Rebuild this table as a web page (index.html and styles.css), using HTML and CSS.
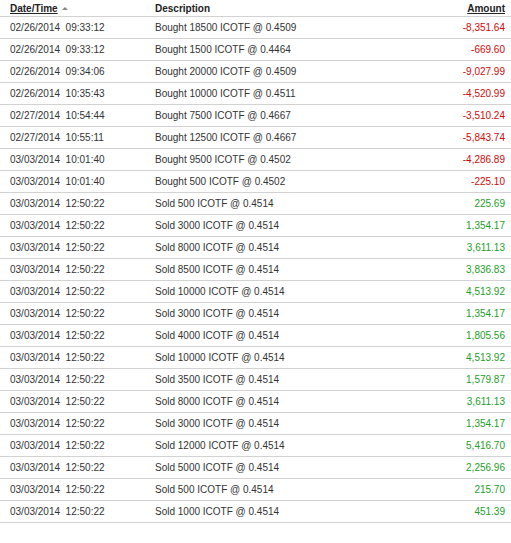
FILE: index.html
```html
<!DOCTYPE html>
<html>
<head>
<meta charset="utf-8">
<link rel="stylesheet" href="styles.css">
</head>
<body>
<table class="tx">
<thead>
<tr>
<th class="c-date"><span class="sort">Date/Time</span><span class="arrow"></span></th>
<th class="c-desc">Description</th>
<th class="c-amt"><span class="sort">Amount</span></th>
</tr>
</thead>
<tbody>
<tr><td class="c-date">02/26/2014&nbsp;&nbsp;09:33:12</td><td class="c-desc">Bought 18500 ICOTF @ 0.4509</td><td class="c-amt neg">-8,351.64</td></tr>
<tr><td class="c-date">02/26/2014&nbsp;&nbsp;09:33:12</td><td class="c-desc">Bought 1500 ICOTF @ 0.4464</td><td class="c-amt neg">-669.60</td></tr>
<tr><td class="c-date">02/26/2014&nbsp;&nbsp;09:34:06</td><td class="c-desc">Bought 20000 ICOTF @ 0.4509</td><td class="c-amt neg">-9,027.99</td></tr>
<tr><td class="c-date">02/26/2014&nbsp;&nbsp;10:35:43</td><td class="c-desc">Bought 10000 ICOTF @ 0.4511</td><td class="c-amt neg">-4,520.99</td></tr>
<tr><td class="c-date">02/27/2014&nbsp;&nbsp;10:54:44</td><td class="c-desc">Bought 7500 ICOTF @ 0.4667</td><td class="c-amt neg">-3,510.24</td></tr>
<tr><td class="c-date">02/27/2014&nbsp;&nbsp;10:55:11</td><td class="c-desc">Bought 12500 ICOTF @ 0.4667</td><td class="c-amt neg">-5,843.74</td></tr>
<tr><td class="c-date">03/03/2014&nbsp;&nbsp;10:01:40</td><td class="c-desc">Bought 9500 ICOTF @ 0.4502</td><td class="c-amt neg">-4,286.89</td></tr>
<tr><td class="c-date">03/03/2014&nbsp;&nbsp;10:01:40</td><td class="c-desc">Bought 500 ICOTF @ 0.4502</td><td class="c-amt neg">-225.10</td></tr>
<tr><td class="c-date">03/03/2014&nbsp;&nbsp;12:50:22</td><td class="c-desc">Sold 500 ICOTF @ 0.4514</td><td class="c-amt pos">225.69</td></tr>
<tr><td class="c-date">03/03/2014&nbsp;&nbsp;12:50:22</td><td class="c-desc">Sold 3000 ICOTF @ 0.4514</td><td class="c-amt pos">1,354.17</td></tr>
<tr><td class="c-date">03/03/2014&nbsp;&nbsp;12:50:22</td><td class="c-desc">Sold 8000 ICOTF @ 0.4514</td><td class="c-amt pos">3,611.13</td></tr>
<tr><td class="c-date">03/03/2014&nbsp;&nbsp;12:50:22</td><td class="c-desc">Sold 8500 ICOTF @ 0.4514</td><td class="c-amt pos">3,836.83</td></tr>
<tr><td class="c-date">03/03/2014&nbsp;&nbsp;12:50:22</td><td class="c-desc">Sold 10000 ICOTF @ 0.4514</td><td class="c-amt pos">4,513.92</td></tr>
<tr><td class="c-date">03/03/2014&nbsp;&nbsp;12:50:22</td><td class="c-desc">Sold 3000 ICOTF @ 0.4514</td><td class="c-amt pos">1,354.17</td></tr>
<tr><td class="c-date">03/03/2014&nbsp;&nbsp;12:50:22</td><td class="c-desc">Sold 4000 ICOTF @ 0.4514</td><td class="c-amt pos">1,805.56</td></tr>
<tr><td class="c-date">03/03/2014&nbsp;&nbsp;12:50:22</td><td class="c-desc">Sold 10000 ICOTF @ 0.4514</td><td class="c-amt pos">4,513.92</td></tr>
<tr><td class="c-date">03/03/2014&nbsp;&nbsp;12:50:22</td><td class="c-desc">Sold 3500 ICOTF @ 0.4514</td><td class="c-amt pos">1,579.87</td></tr>
<tr><td class="c-date">03/03/2014&nbsp;&nbsp;12:50:22</td><td class="c-desc">Sold 8000 ICOTF @ 0.4514</td><td class="c-amt pos">3,611.13</td></tr>
<tr><td class="c-date">03/03/2014&nbsp;&nbsp;12:50:22</td><td class="c-desc">Sold 3000 ICOTF @ 0.4514</td><td class="c-amt pos">1,354.17</td></tr>
<tr><td class="c-date">03/03/2014&nbsp;&nbsp;12:50:22</td><td class="c-desc">Sold 12000 ICOTF @ 0.4514</td><td class="c-amt pos">5,416.70</td></tr>
<tr><td class="c-date">03/03/2014&nbsp;&nbsp;12:50:22</td><td class="c-desc">Sold 5000 ICOTF @ 0.4514</td><td class="c-amt pos">2,256.96</td></tr>
<tr><td class="c-date">03/03/2014&nbsp;&nbsp;12:50:22</td><td class="c-desc">Sold 500 ICOTF @ 0.4514</td><td class="c-amt pos">215.70</td></tr>
<tr><td class="c-date">03/03/2014&nbsp;&nbsp;12:50:22</td><td class="c-desc">Sold 1000 ICOTF @ 0.4514</td><td class="c-amt pos">451.39</td></tr>
</tbody>
</table>
</body>
</html>
```

FILE: styles.css
```css
html, body {
  margin: 0;
  padding: 0;
  background: #ffffff;
}
body {
  font-family: "Liberation Sans", Arial, sans-serif;
  font-size: 10px;
  color: #333333;
}
.tx {
  width: 511px;
  border-collapse: collapse;
  table-layout: fixed;
}
.tx th, .tx td {
  padding: 0;
  white-space: nowrap;
  border-bottom: 1px solid #d2d2d2;
  vertical-align: middle;
}
.tx thead th {
  height: 16px;
  font-weight: bold;
  color: #222222;
  text-align: left;
}
.tx tbody td {
  height: 21px;
}
.c-date {
  width: 145px;
  padding-left: 10px !important;
}
.c-desc {
  width: auto;
}
.c-amt {
  width: 110px;
  text-align: right !important;
  padding-right: 6px !important;
}
.sort {
  text-decoration: underline;
}
.arrow {
  display: inline-block;
  margin-left: 4px;
  width: 0;
  height: 0;
  border-left: 3px solid transparent;
  border-right: 3px solid transparent;
  border-bottom: 3px solid #888888;
  vertical-align: 2px;
}
.neg {
  color: #d10a0a;
}
.pos {
  color: #1e9e2a;
}
```
